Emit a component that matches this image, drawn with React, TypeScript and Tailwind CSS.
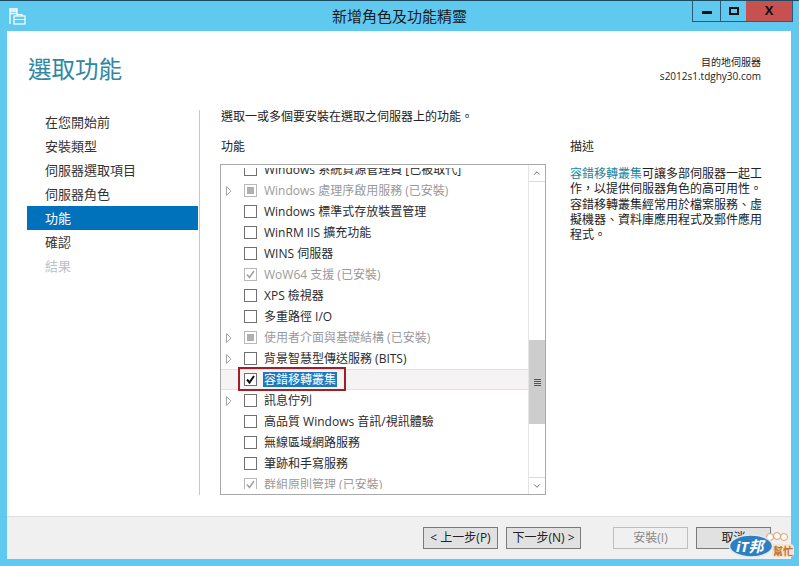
import { ChevronDown, ChevronUp } from 'lucide-react';

const CJK = 'font-["Open_Sans","Noto_Sans_CJK_TC",sans-serif]';

const steps = [
    { label: '在您開始前' },
    { label: '安裝類型' },
    { label: '伺服器選取項目' },
    { label: '伺服器角色' },
    { label: '功能', active: true },
    { label: '確認' },
    { label: '結果', disabled: true },
];

type Feature = {
    label: string;
    state?: 'none' | 'checked' | 'partial';
    installed?: boolean;
    expand?: boolean;
    selected?: boolean;
};

const features: Feature[] = [
    { label: 'Windows 系統資源管理員 [已被取代]' },
    { label: 'Windows 處理序啟用服務 (已安裝)', state: 'partial', installed: true, expand: true },
    { label: 'Windows 標準式存放裝置管理' },
    { label: 'WinRM IIS 擴充功能' },
    { label: 'WINS 伺服器' },
    { label: 'WoW64 支援 (已安裝)', state: 'checked', installed: true },
    { label: 'XPS 檢視器' },
    { label: '多重路徑 I/O' },
    { label: '使用者介面與基礎結構 (已安裝)', state: 'partial', installed: true, expand: true },
    { label: '背景智慧型傳送服務 (BITS)', expand: true },
    { label: '容錯移轉叢集', state: 'checked', selected: true },
    { label: '訊息佇列', expand: true },
    { label: '高品質 Windows 音訊/視訊體驗' },
    { label: '無線區域網路服務' },
    { label: '筆跡和手寫服務' },
    { label: '群組原則管理 (已安裝)', state: 'checked', installed: true },
];

const CheckBox = ({ state, installed }: { state?: Feature['state']; installed?: boolean }) => (
    <span
        className={`flex h-[13px] w-[13px] shrink-0 items-center justify-center border bg-white ${
            installed ? 'border-[#b8b8b8]' : 'border-[#707070]'
        }`}
    >
        {state === 'partial' && <span className="h-[7px] w-[7px] bg-[#b0b0b0]" />}
        {state === 'checked' && (
            <svg width="11" height="11" viewBox="0 0 11 11" fill="none">
                <path
                    d="M2 5.5 L4.5 8.5 L9 2"
                    stroke={installed ? '#a0a0a0' : '#111111'}
                    strokeWidth={installed ? 1.5 : 2}
                />
            </svg>
        )}
    </span>
);

const FeatureRow = ({ item }: { item: Feature }) => (
    <div
        className={`relative flex h-[21px] items-center ${
            item.selected ? 'border-y border-[#e2e2e2] bg-[#f5f3f4]' : ''
        }`}
    >
        <span className="flex w-[23px] shrink-0 justify-start pl-[5px]">
            {item.expand && (
                <svg width="6" height="10" viewBox="0 0 6 10" fill="none">
                    <path d="M0.5 0.5 L5 5 L0.5 9.5 Z" stroke="#a6a6a6" fill="white" />
                </svg>
            )}
        </span>
        <CheckBox state={item.state} installed={item.installed} />
        {item.selected ? (
            <span className="ml-[6px] bg-[#1f78bb] px-[1px] leading-[15px] text-white">{item.label}</span>
        ) : (
            <span className={`ml-[7px] whitespace-nowrap ${item.installed ? 'text-[#9a9a9a]' : 'text-[#2b2b2b]'}`}>
                {item.label}
            </span>
        )}
        {item.selected && (
            <span className="absolute left-[17px] top-[-3px] h-[24px] w-[108px] border-2 border-[#a51d24]" />
        )}
    </div>
);

const ScrollBar = () => (
    <div className="flex w-[17px] shrink-0 flex-col border-l border-[#e4e4e4] bg-white">
        <div className="flex h-[17px] items-center justify-center border-b border-[#dcdcdc] text-[#555555]">
            <ChevronUp size={10} strokeWidth={2} />
        </div>
        <div className="h-[158px]" />
        <div className="flex h-[84px] items-center justify-center bg-[#cdcdcd]">
            <span className="flex flex-col gap-[1px]">
                <span className="h-[1px] w-[7px] bg-[#555555]" />
                <span className="h-[1px] w-[7px] bg-[#555555]" />
                <span className="h-[1px] w-[7px] bg-[#555555]" />
                <span className="h-[1px] w-[7px] bg-[#555555]" />
            </span>
        </div>
        <div className="flex-1" />
        <div className="flex h-[17px] items-center justify-center border-t border-[#dcdcdc] text-[#555555]">
            <ChevronDown size={10} strokeWidth={2} />
        </div>
    </div>
);

const WizardButton = ({ label, disabled }: { label: string; disabled?: boolean }) => (
    <button
        className={`h-[22px] w-[75px] border text-[12px] leading-none ${
            disabled
                ? 'border-[#bfbfbf] bg-[#f0f0f0] text-[#8a8a8a]'
                : 'border-[#7a7a7a] bg-[#e1e1e1] text-[#222222]'
        }`}
    >
        {label}
    </button>
);

const AppIcon = () => (
    <svg width="17" height="17" viewBox="0 0 17 17" fill="none" className="ml-[9px]">
        <path d="M1 16 V1 H8 V6" stroke="white" strokeWidth="1.3" />
        <path d="M1 3 H8 M1 5.5 H8" stroke="white" strokeWidth="1.3" />
        <rect x="5" y="8" width="11" height="8" stroke="white" strokeWidth="1.2" fill="#60c9f0" />
        <path d="M8 8 V6.5 H13 V8 M5 11.5 H16" stroke="white" strokeWidth="1.1" />
    </svg>
);

const Badge = () => (
    <div className="absolute left-[729px] top-[531px] h-[32px] w-[70px]">
        <svg width="70" height="32" viewBox="0 0 70 32" className="absolute left-0 top-0">
            <rect x="43" y="13" width="22" height="13" rx="4" fill="#f6e3d0" />
            <circle cx="41" cy="6" r="3.5" fill="white" stroke="#e09a63" />
            <circle cx="48" cy="5" r="3.5" fill="white" stroke="#e09a63" />
            <circle cx="55" cy="6" r="3.5" fill="white" stroke="#e09a63" />
            <ellipse cx="22" cy="15" rx="21.5" ry="11" fill="#2f7fc0" stroke="#dfeaf3" strokeWidth="1.5" />
        </svg>
        <span className="absolute left-[7px] top-[6px] text-[15px] font-bold italic leading-[18px] text-white">
            iT邦
        </span>
        <span className="absolute left-[44px] top-[14px] text-[10px] font-bold leading-[12px] text-[#c0702f]">
            幫忙
        </span>
    </div>
);

const App = () => {
    return (
        <div className={`relative flex h-[566px] w-[799px] flex-col overflow-hidden bg-[#60c9f0] ${CJK}`}>
            <header className="grid h-[31px] shrink-0 grid-cols-[1fr_auto_1fr] items-center border-t border-[#1c4a60]">
                <AppIcon />
                <h1 className="text-center text-[15px] leading-none text-[#1a1a1a]">新增角色及功能精靈</h1>
                <div className="mr-[6px] flex h-[21px] self-start justify-self-end border border-t-0 border-[#2a5d75]">
                    <span className="flex w-[28px] items-center justify-center border-r border-[#2a5d75]">
                        <span className="mt-[3px] h-[3px] w-[10px] bg-[#111111]" />
                    </span>
                    <span className="flex w-[25px] items-center justify-center">
                        <span className="h-[8px] w-[10px] border-2 border-[#111111]" />
                    </span>
                    <span className="flex w-[46px] items-center justify-center bg-[#c75050] text-[13px] font-bold text-[#111111]">
                        X
                    </span>
                </div>
            </header>

            <main className="ml-[7px] mr-[8px] flex min-h-0 flex-1 flex-col bg-white">
                <div className="flex h-[79px] shrink-0 items-start justify-between pl-[21px] pr-[30px]">
                    <h2 className="mt-[22px] text-[23.5px] leading-[32px] text-[#2e87a3]">選取功能</h2>
                    <div className="mt-[24px] text-right text-[10px] leading-[14px] text-[#222222]">
                        <div>目的地伺服器</div>
                        <div>s2012s1.tdghy30.com</div>
                    </div>
                </div>

                <div className="flex min-h-0 flex-1">
                    <nav className="mb-[21px] w-[193px] shrink-0 border-r border-[#c8c8c8] pl-[20px] pr-[1px]">
                        {steps.map((step) => (
                            <div
                                key={step.label}
                                className={`flex h-[24px] items-center pl-[18px] pt-[1px] text-[13px] ${
                                    step.active
                                        ? 'bg-[#0072bc] text-white'
                                        : step.disabled
                                          ? 'text-[#c0c0c0]'
                                          : 'text-[#333333]'
                                }`}
                            >
                                {step.label}
                            </div>
                        ))}
                    </nav>

                    <section className="flex min-w-0 flex-1 flex-col pl-[20px] text-[12px] text-[#222222]">
                        <p className="mt-[-1px] pl-[1px] leading-[16px]">選取一或多個要安裝在選取之伺服器上的功能。</p>
                        <div className="mt-[14px] flex flex-1">
                            <div className="flex w-[326px] shrink-0 flex-col">
                                <div className="h-[25px] pl-[1px] leading-[16px]">功能</div>
                                <div className="flex h-[331px] border border-[#a9a9a9]">
                                    <div className="flex min-w-0 flex-1 flex-col pb-[5px] pt-[3px]">
                                        <div className="min-h-0 flex-1 overflow-hidden">
                                            <div className="mt-[-9px]">
                                                {features.map((item) => (
                                                    <FeatureRow key={item.label} item={item} />
                                                ))}
                                            </div>
                                        </div>
                                    </div>
                                    <ScrollBar />
                                </div>
                            </div>
                            <aside className="ml-[24px] w-[194px]">
                                <div className="h-[25px] leading-[16px]">描述</div>
                                <p className="mt-[2px] leading-[15.25px]">
                                    <span className="text-[#16859f]">容錯移轉叢集</span>
                                    可讓多部伺服器一起工作，以提供伺服器角色的高可用性。容錯移轉叢集經常用於檔案服務、虛擬機器、資料庫應用程式及郵件應用程式。
                                </p>
                            </aside>
                        </div>
                    </section>
                </div>

                <footer className="flex h-[43px] shrink-0 items-center border-t border-[#dfdfdf] bg-[#f0f0f0] pr-[20px]">
                    <div className="ml-auto flex gap-[8px]">
                        <WizardButton label="< 上一步(P)" />
                        <WizardButton label="下一步(N) >" />
                    </div>
                    <div className="ml-[32px] flex gap-[8px]">
                        <WizardButton label="安裝(I)" disabled />
                        <WizardButton label="取消" />
                    </div>
                </footer>
            </main>
            <div className="h-[7px] shrink-0" />
            <Badge />
        </div>
    );
};

export default App;
